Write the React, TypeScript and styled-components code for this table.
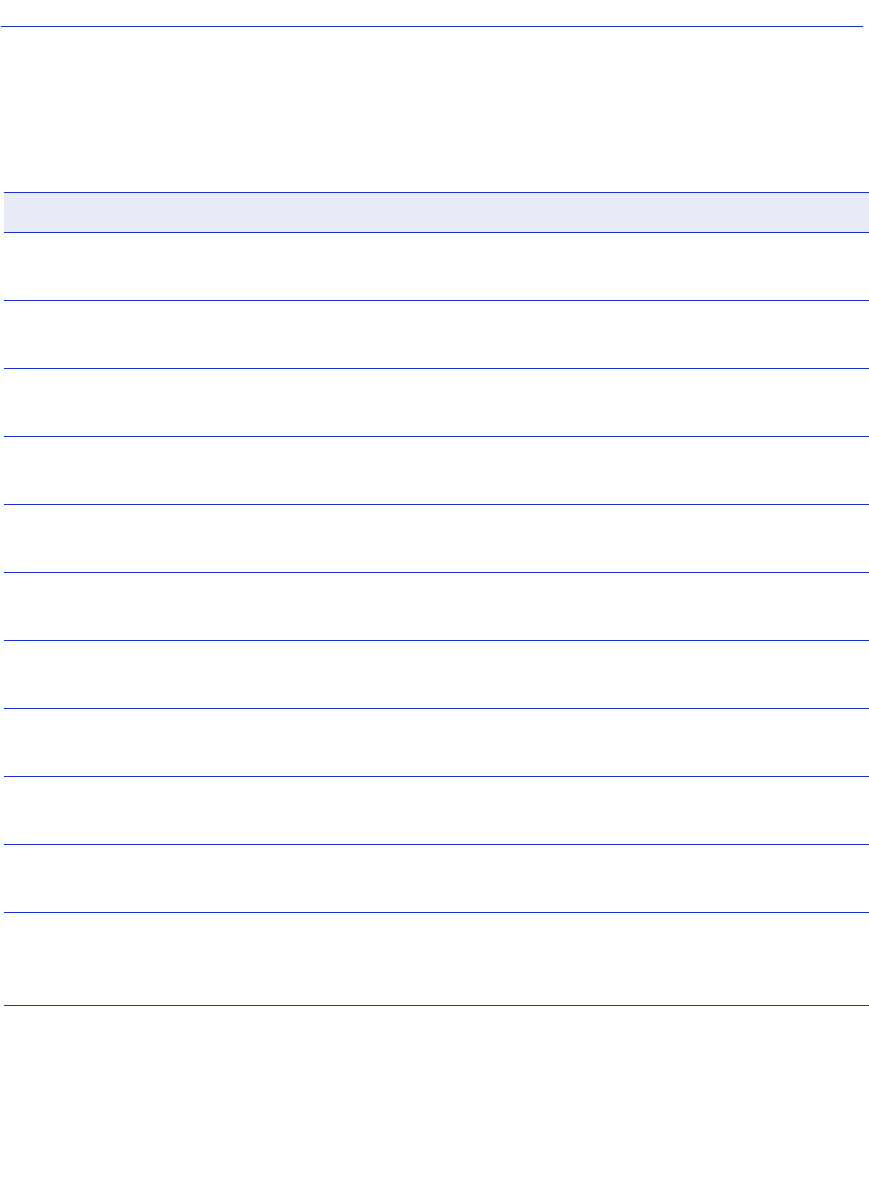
import React from 'react';
import styled, { createGlobalStyle } from 'styled-components';

const GlobalStyle = createGlobalStyle`
  body {
    margin: 0;
    background: #fff;
    font-family: "Liberation Sans", Arial, sans-serif;
  }
`;

const LINE = '#1a33c4';

const Page = styled.div`
  width: 869px;
  min-height: 1190px;
  padding-top: 26px;
  box-sizing: border-box;
`;

const TopRule = styled.div`
  margin-left: 1px;
  width: 862px;
  height: 1px;
  background: ${LINE};
`;

const Table = styled.div`
  margin: 165px 0 0 4px;
  width: 865px;
  border-top: 1px solid ${LINE};
`;

const HeaderRow = styled.div`
  height: 39px;
  background: #e8eaf7;
  border-bottom: 1px solid ${LINE};
`;

const Row = styled.div<{ tall?: boolean }>`
  height: ${(p) => (p.tall ? '92px' : '67px')};
  border-bottom: 1px solid ${LINE};
`;

const rows = Array.from({ length: 11 }, (_, i) => i);

const App: React.FC = () => {
  return (
    <>
      <GlobalStyle />
      <Page>
        <TopRule />
        <Table>
          <HeaderRow />
          {rows.map((i) => (
            <Row key={i} tall={i === rows.length - 1} />
          ))}
        </Table>
      </Page>
    </>
  );
};

export default App;
